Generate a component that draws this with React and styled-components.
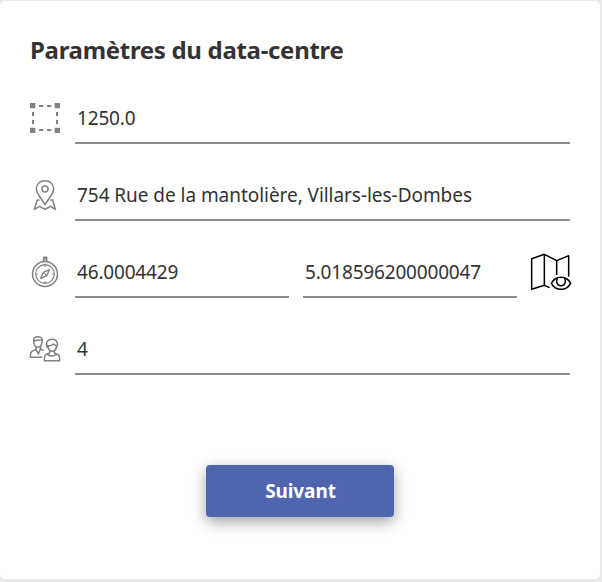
import React from "react";
import styled, { createGlobalStyle } from "styled-components";

const GlobalStyle = createGlobalStyle`
  * { box-sizing: border-box; }
  body {
    margin: 0;
    background: #ebebeb;
    color: #333;
    font-family: "Segoe UI", "Noto Sans", "Open Sans", sans-serif;
  }
`;

const Page = styled.div`
  height: 582px;
  padding: 1px 2px 3px 0;
  overflow: hidden;
`;

const Card = styled.form`
  display: flex;
  flex-direction: column;
  height: 578px;
  padding: 31px 30px 0;
  background: #fff;
  border-radius: 5px;
  box-shadow: 0 1px 3px rgba(0, 0, 0, 0.03);
`;

const Title = styled.h1`
  margin: 0 0 24px;
  height: 36px;
  line-height: 36px;
  font-size: 24px;
  font-weight: 700;
  letter-spacing: -0.31px;
  white-space: nowrap;
`;

const Rows = styled.div`
  display: flex;
  flex-direction: column;
  gap: 25px;
`;

const Row = styled.div`
  display: flex;
  align-items: center;
  height: 52px;
  margin-left: -1px;
`;

const Icon = styled.svg`
  display: block;
  flex: none;
  width: 32px;
  height: 32px;
  margin-right: 14px;
  fill: none;
  stroke: #808080;
  stroke-width: 4.5;
  stroke-linejoin: round;
`;

const MapButton = styled.button`
  flex: none;
  width: 44px;
  height: 42px;
  margin: 0 -2px 0 12px;
  padding: 0;
  border: 0;
  background: none;
`;

const MapIcon = styled.svg`
  display: block;
  width: 44px;
  height: 42px;
  fill: none;
  stroke: #000;
  stroke-width: 4.5;
  stroke-linejoin: round;
`;

const Input = styled.input`
  flex: ${(p) => (p.$half ? "0 0 214px" : "0 0 495px")};
  min-width: 0;
  height: 52px;
  padding: 2px 2px 0;
  border: 0;
  border-bottom: 2px solid #8c8c8c;
  border-radius: 0;
  outline: 0;
  background: transparent;
  color: #333;
  font: 400 19px/28px "Segoe UI", "Noto Sans", "Open Sans", sans-serif;
  letter-spacing: ${(p) => (p.$numeric ? -0.18 : -0.05)}px;

  & + & { margin-left: 14px; }
`;

const NextButton = styled.button`
  align-self: center;
  width: 188px;
  height: 52px;
  margin-top: 90px;
  padding: 0;
  border: 0;
  border-radius: 4px;
  background: #5164ae;
  color: #fff;
  font: 700 19px/52px "Segoe UI", "Noto Sans", "Open Sans", sans-serif;
  letter-spacing: -0.1px;
  text-indent: 1px;
  box-shadow: 0 5px 14px rgba(0, 0, 0, 0.36);
`;

const AreaIcon = () => (
  <Icon viewBox="27 21 96 96">
    <g fill="#808080" stroke="none">
      <path d="M30 24h16v16H30zM104 24h16v16h-16zM30 98h16v16H30zM104 98h16v16h-16z" />
      <path d="M57 30h13v6H57zM81 30h13v6H81zM57 102h13v6H57zM81 102h13v6H81z" />
      <path d="M36 51h6v12h-6zM36 75h6v12h-6zM108 51h6v12h-6zM108 75h6v12h-6z" />
    </g>
  </Icon>
);

const PinIcon = () => (
  <Icon viewBox="27 27 96 96">
    <path d="M75 104C66 87 49 72 49 57C49 42 60 32 75 32S101 42 101 57C101 72 84 87 75 104Z" />
    <circle cx="75" cy="57" r="9" />
    <path d="M59 90H52L43 118L59 109L75 118L91 109L106 118L98 90H91" />
  </Icon>
);

const CompassIcon = () => (
  <Icon viewBox="27 27 96 96">
    <circle cx="75" cy="81" r="37.5" />
    <circle cx="75" cy="81" r="28" strokeWidth="3.5" />
    <path d="M71 43V31H80V43M71 36H80" />
    <path d="M88 68L80 86L62 94L70 76Z" strokeWidth="4" />
    <path d="M70 76L80 86M75 54v5M75 103v5M48 81h5M97 81h5" strokeWidth="3.5" />
  </Icon>
);

const PeopleIcon = () => (
  <Icon viewBox="27 24 96 96">
    <path d="M41 51C38 38 46 35 53 35C64 34 69 40 66 52C65 61 60 66 54 67C47 66 42 61 41 51ZM42 49C48 44 55 48 65 44" />
    <path d="M48 66V73L36 79Q31 82 31 97H67M61 66V72L71 76M48 73L55 87L61 72" />
    <path d="M82 69C76 59 79 43 96 43C113 43 116 60 109 69" />
    <path d="M83 61C90 64 97 60 100 57C103 61 107 61 110 62C109 73 103 79 96 79C89 78 84 72 83 61Z" />
    <path d="M89 78V84L78 88Q73 91 73 107H119Q119 91 114 88L103 84V78M82 88Q95 98 110 88" />
  </Icon>
);

const ShowMapIcon = () => (
  <MapIcon viewBox="27 18 132 126">
    <path d="M89 128L73 121L35 133V41L73 28L110 47L146 32V95M73 28V121M110 47V90" />
    <path d="M94 115C107 91 139 91 152 115C139 139 107 139 94 115Z" />
    <path d="M112 100C107 110 111 122 123 122S139 110 134 100" />
  </MapIcon>
);

export default function App() {
  return (
    <Page>
      <GlobalStyle />
      <Card onSubmit={(e) => e.preventDefault()}>
        <Title>Paramètres du data-centre</Title>
        <Rows>
          <Row>
            <AreaIcon />
            <Input $numeric aria-label="Surface" defaultValue="1250.0" />
          </Row>
          <Row>
            <PinIcon />
            <Input
              aria-label="Adresse"
              defaultValue="754 Rue de la mantolière, Villars-les-Dombes"
            />
          </Row>
          <Row>
            <CompassIcon />
            <Input $half $numeric aria-label="Latitude" defaultValue="46.0004429" />
            <Input $half $numeric aria-label="Longitude" defaultValue="5.018596200000047" />
            <MapButton type="button" aria-label="Voir la carte">
              <ShowMapIcon />
            </MapButton>
          </Row>
          <Row>
            <PeopleIcon />
            <Input $numeric aria-label="Personnes" defaultValue="4" />
          </Row>
        </Rows>
        <NextButton type="submit">Suivant</NextButton>
      </Card>
    </Page>
  );
}
